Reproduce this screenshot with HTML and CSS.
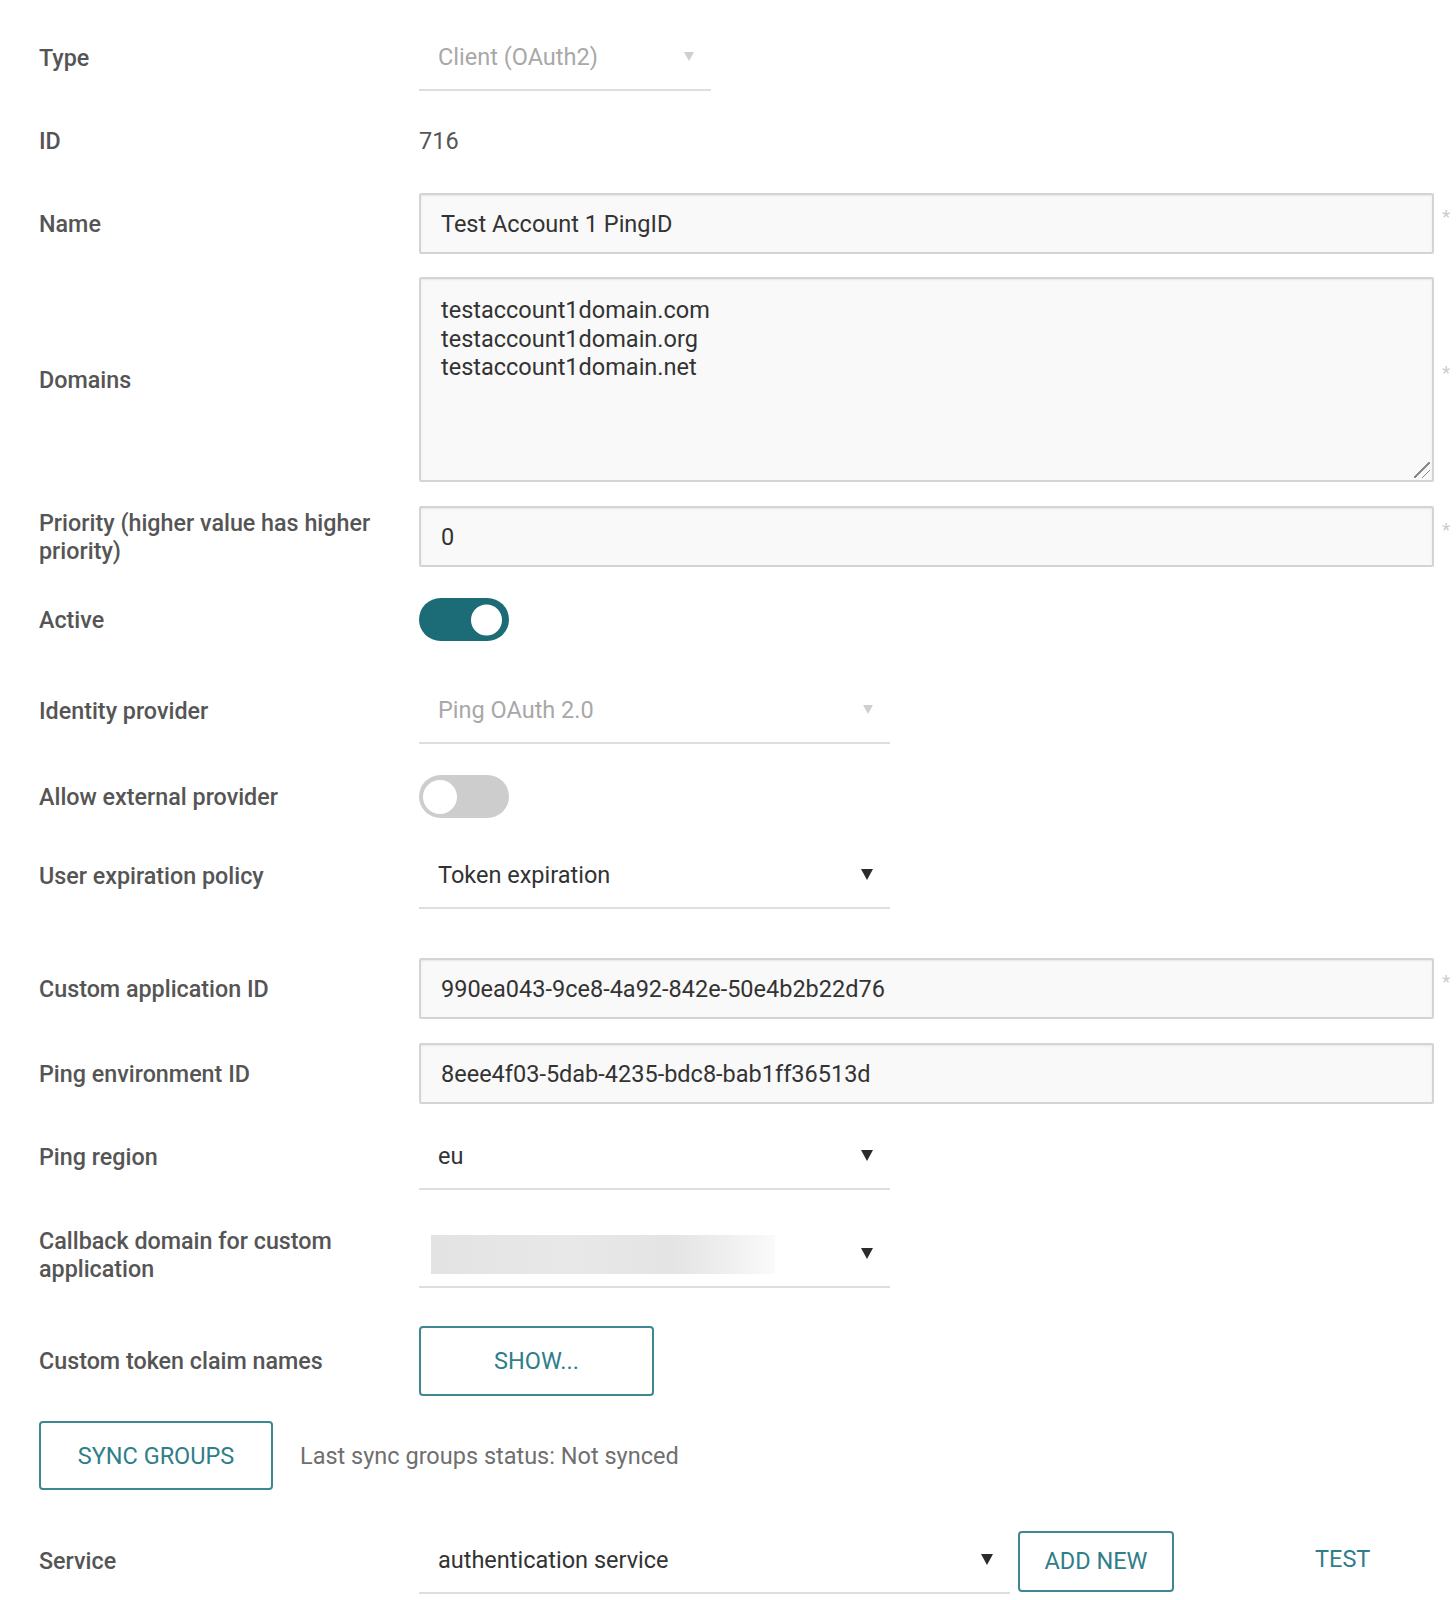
FILE: index.html
```html
<!DOCTYPE html>
<html lang="en">
<head>
<meta charset="utf-8">
<title>Account settings</title>
<link rel="stylesheet" href="styles.css">
</head>
<body>
<form class="form">
  <div class="row r-type">
    <div class="label">Type</div>
    <div class="select select-sm disabled"><span class="select-text">Client (OAuth2)</span><span class="caret"></span></div>
  </div>
  <div class="row r-id">
    <div class="label">ID</div>
    <div class="value">716</div>
  </div>
  <div class="row r-name">
    <div class="label">Name</div>
    <div class="input">Test Account 1 PingID</div>
    <span class="req">*</span>
  </div>
  <div class="row r-domains">
    <div class="label">Domains</div>
    <div class="textarea-wrap">
      <textarea class="textarea">testaccount1domain.com
testaccount1domain.org
testaccount1domain.net</textarea>
    </div>
    <span class="req">*</span>
  </div>
  <div class="row r-priority">
    <div class="label">Priority (higher value has higher priority)</div>
    <div class="input">0</div>
    <span class="req">*</span>
  </div>
  <div class="row r-active">
    <div class="label">Active</div>
    <div class="toggle on"><span class="knob"></span></div>
  </div>
  <div class="row r-idp">
    <div class="label">Identity provider</div>
    <div class="select select-md disabled"><span class="select-text">Ping OAuth 2.0</span><span class="caret"></span></div>
  </div>
  <div class="row r-allow">
    <div class="label">Allow external provider</div>
    <div class="toggle off"><span class="knob"></span></div>
  </div>
  <div class="row r-exp">
    <div class="label">User expiration policy</div>
    <div class="select select-md"><span class="select-text">Token expiration</span><span class="caret"></span></div>
  </div>
  <div class="row r-appid">
    <div class="label">Custom application ID</div>
    <div class="input">990ea043-9ce8-4a92-842e-50e4b2b22d76</div>
    <span class="req">*</span>
  </div>
  <div class="row r-envid">
    <div class="label">Ping environment ID</div>
    <div class="input">8eee4f03-5dab-4235-bdc8-bab1ff36513d</div>
    <span class="req"></span>
  </div>
  <div class="row r-region">
    <div class="label">Ping region</div>
    <div class="select select-md"><span class="select-text">eu</span><span class="caret"></span></div>
  </div>
  <div class="row r-callback">
    <div class="label">Callback domain for custom application</div>
    <div class="select select-md"><span class="blurred"></span><span class="caret"></span></div>
  </div>
  <div class="row r-claims">
    <div class="label">Custom token claim names</div>
    <button type="button" class="btn btn-show">SHOW...</button>
  </div>
  <div class="row r-sync">
    <button type="button" class="btn btn-sync">SYNC GROUPS</button>
    <span class="status">Last sync groups status: Not synced</span>
  </div>
  <div class="row r-service">
    <div class="label">Service</div>
    <div class="select select-lg"><span class="select-text">authentication service</span><span class="caret"></span></div>
    <button type="button" class="btn btn-add">ADD NEW</button>
    <button type="button" class="btn-text">TEST</button>
  </div>
</form>
</body>
</html>
```
FILE: styles.css
```css
* { box-sizing: border-box; }

html, body {
  margin: 0;
  padding: 0;
  background: #ffffff;
}

body {
  font-family: Roboto, "Liberation Sans", Arial, sans-serif;
  font-size: 23.5px;
  color: #333;
}

.form {
  padding: 25px 0 0 39px;
  width: 1456px;
}

.row {
  display: flex;
  align-items: center;
}

.label {
  flex: 0 0 380px;
  width: 380px;
  padding-right: 30px;
  font-weight: 500;
  font-size: 23.3px;
  color: #555;
  line-height: 28px;
}

.value {
  color: #555;
  line-height: 28px;
}

/* vertical rhythm */
.r-id { margin-top: 36px; }
.r-name { margin-top: 38px; }
.r-domains { margin-top: 23px; }
.r-priority { margin-top: 24px; }
.r-active { margin-top: 31px; }
.r-idp { margin-top: 37px; }
.r-allow { margin-top: 31px; }
.r-exp { margin-top: 25px; }
.r-appid { margin-top: 49px; }
.r-envid { margin-top: 24px; }
.r-region { margin-top: 20px; }
.r-callback { margin-top: 32px; }
.r-claims { margin-top: 38px; }
.r-sync { margin-top: 25px; }
.r-service { margin-top: 38px; }

/* inputs */
.input {
  width: 1022px;
  height: 61px;
  display: flex;
  align-items: center;
  padding: 0 20px;
  background: #f9f9f9;
  border: 2px solid #d4d4d4;
  border-radius: 2px;
  box-shadow: inset 0 1px 2px rgba(0,0,0,0.08);
  color: #333;
}

.textarea-wrap {
  position: relative;
  width: 1022px;
  height: 205px;
}

.textarea-wrap::after {
  content: "";
  position: absolute;
  right: 4px;
  bottom: 4px;
  width: 16px;
  height: 16px;
  background:
    linear-gradient(135deg, transparent 0 46%, #8a8a8a 46% 54%, transparent 54% 100%) 0 0 / 16px 16px no-repeat,
    linear-gradient(135deg, transparent 0 46%, #8a8a8a 46% 54%, transparent 54% 100%) 8px 8px / 8px 8px no-repeat;
  pointer-events: none;
}

.textarea {
  display: block;
  width: 100%;
  height: 100%;
  padding: 17px 20px;
  margin: 0;
  background: #f9f9f9;
  border: 2px solid #d4d4d4;
  border-radius: 2px;
  box-shadow: inset 0 1px 2px rgba(0,0,0,0.08);
  font-family: Roboto, "Liberation Sans", Arial, sans-serif;
  font-size: 23.5px;
  line-height: 28.5px;
  color: #333;
  resize: none;
  outline: none;
  overflow: hidden;
}

.req {
  align-self: center;
  width: 20px;
  margin-left: 2px;
  margin-top: -14px;
  font-size: 19px;
  color: #c9cdd3;
  text-align: center;
}

/* selects */
.select {
  position: relative;
  height: 66px;
  display: flex;
  align-items: center;
  padding: 0 19px;
  border-bottom: 2px solid #dedede;
}

.select-sm { width: 292px; }
.select-md { width: 471px; }
.select-lg { width: 591px; }

.select-text {
  flex: 1;
  color: #333;
}

.select.disabled .select-text {
  color: #a8a8a8;
}

.caret {
  width: 0;
  height: 0;
  border-left: 6px solid transparent;
  border-right: 6px solid transparent;
  border-top: 11px solid #2b2b2b;
  margin-right: -2px;
  margin-top: -2px;
}

.select.disabled .caret {
  border-left-width: 5px;
  border-right-width: 5px;
  border-top: 9px solid #cfcfcf;
}

.blurred {
  flex: 0 0 344px;
  height: 39px;
  margin-left: -7px;
  margin-right: auto;
  background: linear-gradient(to right, #e3e3e3 0%, #e8e8e8 40%, #e4e4e4 70%, #eeeeee 85%, #fafafa 100%);
}

/* toggles */
.toggle {
  position: relative;
  width: 90px;
  height: 43px;
  border-radius: 22px;
}

.toggle.on { background: #1c6c77; }
.toggle.off { background: #cdcdcd; }

.knob {
  position: absolute;
  top: 50%;
  background: #ffffff;
  border-radius: 50%;
}

.toggle.on .knob {
  width: 31px;
  height: 31px;
  right: 7px;
  transform: translateY(-50%);
}

.toggle.off .knob {
  width: 34px;
  height: 34px;
  left: 4px;
  transform: translateY(-50%);
}

/* buttons */
.btn {
  font-family: Roboto, "Liberation Sans", Arial, sans-serif;
  font-size: 23.5px;
  color: #2f7e89;
  background: #ffffff;
  border: 2px solid #3e8894;
  border-radius: 4px;
  padding: 0;
  cursor: pointer;
}

.btn-show { width: 235px; height: 70px; }
.btn-sync { width: 234px; height: 69px; }
.btn-add { width: 156px; height: 61px; margin-left: 8px; }

.status {
  margin-left: 27px;
  color: #6f6f6f;
}

.btn-text {
  font-family: Roboto, "Liberation Sans", Arial, sans-serif;
  font-size: 23.5px;
  color: #2f7e89;
  background: none;
  border: none;
  padding: 0;
  margin-left: 141px;
  margin-top: -4px;
}
```
